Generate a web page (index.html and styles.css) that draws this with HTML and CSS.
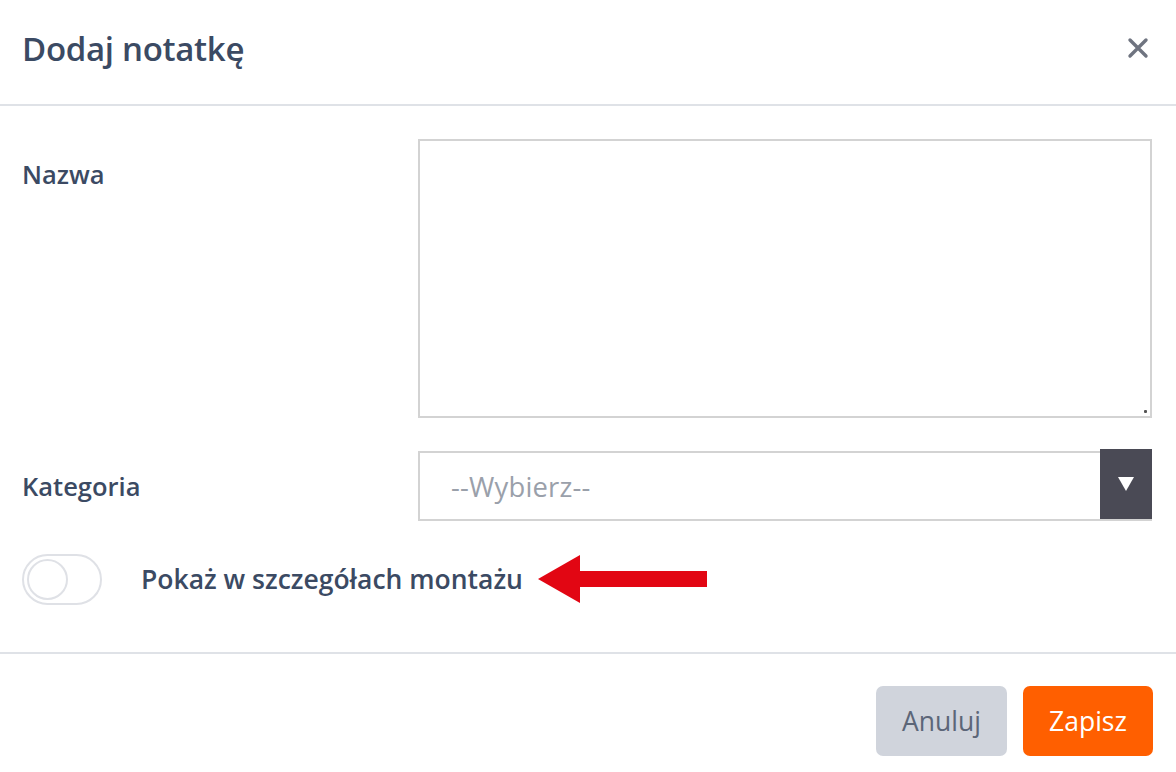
FILE: index.html
```html
<!DOCTYPE html>
<html lang="pl">
<head>
<meta charset="utf-8">
<title>Dodaj notatkę</title>
<link rel="stylesheet" href="styles.css">
</head>
<body>
<div class="modal">
  <div class="modal-header">
    <h1 class="modal-title">Dodaj notatkę</h1>
    <button class="close-btn" aria-label="Zamknij">
      <svg width="22" height="22" viewBox="0 0 22 22"><path d="M3 3 L19 19 M19 3 L3 19" stroke="#6f7480" stroke-width="3.4" stroke-linecap="round"/></svg>
    </button>
  </div>
  <div class="modal-body">
    <div class="form-row row-name">
      <label class="form-label label-top">Nazwa</label>
      <div class="textarea-wrap">
        <textarea class="textarea"></textarea>
        <span class="grip"></span>
      </div>
    </div>
    <div class="form-row row-cat">
      <label class="form-label">Kategoria</label>
      <div class="select">
        <span class="select-text">--Wybierz--</span>
        <span class="select-btn"><svg width="16" height="14" viewBox="0 0 16 14"><path d="M0 0 H16 L8 14 Z" fill="#fff"/></svg></span>
      </div>
    </div>
    <div class="toggle-row">
      <span class="toggle"><span class="knob"></span></span>
      <span class="toggle-label">Pokaż w szczegółach montażu</span>
      <svg class="arrow" width="172" height="50" viewBox="0 0 172 50"><path d="M0 25 L42 1 L42 17 L169 17 L169 33 L42 33 L42 49 Z" fill="#e20613"/></svg>
    </div>
  </div>
  <div class="modal-footer">
    <button class="btn btn-cancel">Anuluj</button>
    <button class="btn btn-save">Zapisz</button>
  </div>
</div>
</body>
</html>
```
FILE: styles.css
```css
* { box-sizing: border-box; }
html, body { margin: 0; padding: 0; background: #fff; }
body { font-family: "Open Sans", "Noto Sans", sans-serif; color: #3b4a63; }
.modal { width: 1176px; height: 772px; display: flex; flex-direction: column; }
.modal-header {
  height: 106px; display: flex; align-items: center; justify-content: space-between;
  padding: 0 27px 8px 22px; border-bottom: 2px solid #dfe2e7;
}
.modal-title { margin: 0; font-size: 33px; font-weight: 600; color: #3b4a63; letter-spacing: -0.3px; }
.close-btn { background: none; border: 0; padding: 0; display: flex; cursor: pointer; }
.modal-body { padding: 33px 24px 0 22px; height: 548px; border-bottom: 2px solid #dfe2e7; }
.form-row { display: grid; grid-template-columns: 396px 1fr; }
.form-label { font-size: 25.5px; font-weight: 600; color: #3b4a63; }
.row-name { height: 312px; }
.label-top { padding-top: 18px; }
.textarea-wrap { position: relative; height: 279px; }
.textarea {
  display: block; width: 100%; height: 279px; border: 2px solid #d3d3d3; border-radius: 0;
  resize: none; font: inherit; margin: 0; outline: none;
}
.grip { position: absolute; right: 5px; bottom: 5px; width: 3px; height: 3px; background: #555; border-radius: 1px; }
.row-cat { align-items: center; height: 70px; }
.select {
  height: 70px; border: 2px solid #d3d3d3; border-right: 0; display: flex; align-items: center;
}
.select-text { flex: 1; padding-left: 31px; font-size: 27.4px; color: #9aa0aa; letter-spacing: 0.2px; }
.select-btn { width: 52px; height: 70px; margin-top: -4px; margin-bottom: -4px; background: #4a4a55; display: flex; align-items: center; justify-content: center; align-self: stretch; }
.toggle-row { display: flex; align-items: center; margin-top: 32px; height: 52px; }
.toggle {
  width: 80px; height: 51px; border: 2px solid #dfe1e6; border-radius: 26px; position: relative; flex: none;
}
.knob { position: absolute; left: 3px; top: 3px; width: 41px; height: 41px; border-radius: 50%; border: 2px solid #dfe1e6; background: #fff; }
.toggle-label { margin-left: 39px; font-size: 26.5px; font-weight: 600; color: #3b4a63; }
.arrow { margin-left: 15px; flex: none; }
.modal-footer { flex: 1; display: flex; justify-content: flex-end; align-items: flex-start; padding: 32px 23px 0 0; gap: 16px; }
.btn { height: 70px; border: 0; border-radius: 7px; font-family: inherit; font-size: 26.5px; padding: 0; cursor: pointer; }
.btn-cancel { width: 131px; background: #d0d4dc; color: #5c6678; }
.btn-save { width: 130px; background: #ff5f00; color: #fff; }
```
